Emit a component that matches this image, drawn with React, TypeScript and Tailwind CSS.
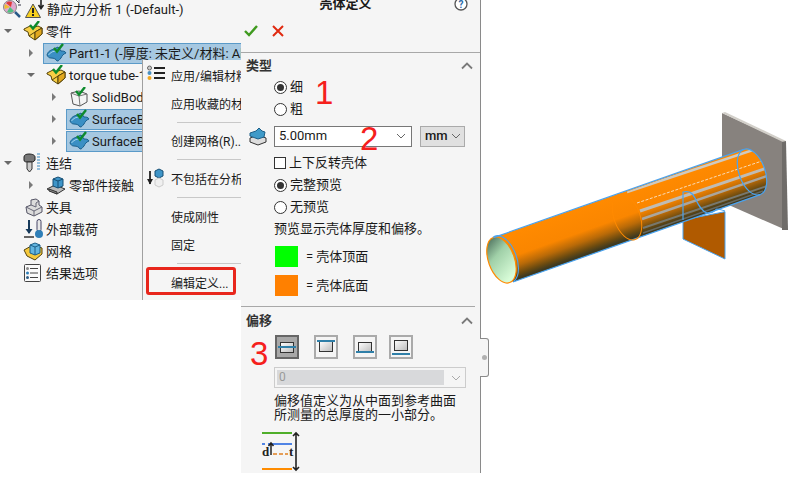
import React from "react";

const cjk = 'Roboto,"Noto Sans CJK SC",sans-serif';

const Check = ({ x = 8, y = 0 }: { x?: number; y?: number }) => (
  <path d={`M${x} ${y + 5}l3 3.500 6-7.500`} fill="none" stroke="#0d8a2c" strokeWidth="2.400" />
);

const ShellIcon = () => (
  <svg width="22" height="20" viewBox="0 0 22 20" className="shrink-0">
    <path d="M1 12c1-4 4-5 7-6l4-2 3 4c2 0 4 0 5 2-3 1-4 3-5 5-2 2-2 3-4 3-1-2-3-3-6-3-2 0-3-1-4-3z" fill="#3a8fc4" stroke="#1a5f8c" />
    <path d="M2.500 12c2-3 5-4 8-4" stroke="#a8d8f0" fill="none" />
    <Check x={8} y={0} />
  </svg>
);

const BoxIcon = () => (
  <svg width="22" height="20" viewBox="0 0 22 20" className="shrink-0">
    <path d="M1 8l6-3 3 1.500L15 5l4 2v6l-7 6-6-4-1-4-4-2z" fill="#f8cf45" stroke="#54430c" />
    <path d="M6 15l6-4 7-4M12 11v8" stroke="#54430c" fill="none" />
    <path d="M12 19l7-6V7l-7 4z" fill="#e2a81e" stroke="#54430c" />
    <Check x={7} y={-1} />
  </svg>
);

const SolidIcon = () => (
  <svg width="22" height="20" viewBox="0 0 22 20" className="shrink-0">
    <path d="M2 6l8-2 8 3v8l-7 4-7-2z" fill="#f4f4f4" stroke="#555" />
    <path d="M2 6l8 3 8-2M10 9l1 10" fill="none" stroke="#777" />
    <Check x={7} y={-1} />
  </svg>
);

const Tri = ({ open }: { open?: boolean }) =>
  open ? (
    <span className="w-0 h-0 border-x-[4px] border-x-transparent border-t-[4px] border-t-[#6a6a6a] shrink-0" />
  ) : (
    <span className="w-0 h-0 border-y-[4px] border-y-transparent border-l-[4px] border-l-[#7a7a7a] shrink-0" />
  );

function Row({
  pad,
  tri,
  open,
  icon,
  text,
  selected,
  selWidth,
}: {
  pad: number;
  tri?: boolean;
  open?: boolean;
  icon: React.ReactNode;
  text: string;
  selected?: boolean;
  selWidth?: string;
}) {
  return (
    <div className="h-[22px] flex items-center whitespace-nowrap text-[13px] text-[#1a1a1a]" style={{ paddingLeft: pad }}>
      <span className="w-[14px] flex items-center justify-center shrink-0">{tri ? <Tri open={open} /> : null}</span>
      <span className={`flex items-center h-[21px] ml-[5px] gap-[1px] shrink-0 ${selected ? "pl-[2px] bg-[#a6c8e1] border border-[#5a9ac8] " + (selWidth ?? "") : "pl-[3px]"}`}>
        {icon}
        <span className="pt-[2px]">{text}</span>
      </span>
    </div>
  );
}

const MenuItem = ({ text, icon }: { text: string; icon?: React.ReactNode }) => (
  <div className="h-7 flex items-center relative pl-[28px] pt-[3px] whitespace-nowrap text-[12px] text-[#1a1a1a]">
    {icon ? <span className="absolute left-[4px] top-[4px]">{icon}</span> : null}
    {text}
  </div>
);

const Chevron = () => (
  <svg width="12" height="8" viewBox="0 0 12 8"><path d="M1 6.500l5-5 5 5" fill="none" stroke="#7a7a7a" strokeWidth="1.800" /></svg>
);

const SmallDown = ({ color = "#666" }: { color?: string }) => (
  <svg width="10" height="6" viewBox="0 0 10 6" className="shrink-0"><path d="M1 1l4 4 4-4" fill="none" stroke={color} /></svg>
);

const Radio = ({ on }: { on?: boolean }) => (
  <span className="w-[13px] h-[13px] rounded-full border border-[#333] bg-white flex items-center justify-center shrink-0">
    {on ? <span className="w-[7px] h-[7px] rounded-full bg-[#333]" /> : null}
  </span>
);

const Opt = ({ on, text }: { on?: boolean; text: string }) => (
  <div className="h-[22px] flex items-center gap-[3px] pl-[33px]">
    <Radio on={on} />
    <span>{text}</span>
  </div>
);

const OffsetBtn = ({ active, kind, cls }: { active?: boolean; kind: number; cls?: string }) => {
  const lineY = kind === 0 ? 9 : kind === 1 ? 3 : kind === 2 ? 14 : 16;
  const rectY = kind === 0 ? 5 : kind === 1 ? 4 : kind === 2 ? 5 : 3;
  return (
    <span className={`w-[24px] h-[24px] border-2 flex items-center justify-center shrink-0 ${active ? "border-[#666] bg-[#a8a8a8]" : "border-[#aaa] bg-[#f5f5f5]"} ${cls ?? ""}`}>
      <svg width="20" height="20" viewBox="0 0 20 20">
        <defs>
          <linearGradient id={`g${kind}`} x1="0" y1="0" x2="1" y2="1">
            <stop offset="0" stopColor="#fff" />
            <stop offset="1" stopColor="#bbb" />
          </linearGradient>
        </defs>
        <rect x="3.500" y={rectY + 0.5} width="13" height="10" fill={`url(#g${kind})`} stroke="#333" />
        <rect x="1" y={lineY} width="18" height="2" fill="#2f7fa8" />
      </svg>
    </span>
  );
};

const Tube = () => (
  <svg width="321" height="479" viewBox="481 0 321 479" className="block">
    <defs>
      <linearGradient id="or" gradientUnits="userSpaceOnUse" x1="627" y1="192" x2="642" y2="234">
        <stop offset="0" stopColor="#ff8a00" />
        <stop offset="0.5" stopColor="#fa8600" />
        <stop offset="0.72" stopColor="#b96a08" />
        <stop offset="0.9" stopColor="#6a4a10" />
        <stop offset="1" stopColor="#3f3a20" />
      </linearGradient>
      <linearGradient id="inner" x1="0" y1="0" x2="0.3" y2="1">
        <stop offset="0" stopColor="#3f5f50" />
        <stop offset="0.45" stopColor="#a0d0a8" />
        <stop offset="1" stopColor="#d8fcd8" />
      </linearGradient>
      <clipPath id="tubeclip">
        <path d="M618.800 194.400L743.800 149.400A13 24 -20 0 1 760.200 194.600L635.200 239.600A13 24 -20 0 0 618.800 194.400z" />
      </clipPath>
    </defs>
    <polygon points="722,113 785,142 786,230 722,202" fill="#87827e" />
    <polygon points="722,113 725,112 786,141 785,143" fill="#d2cfc9" />
    <polygon points="782,142 786,141 788,230 782,230" fill="#6f6c69" />
    <polygon points="683,220 725,211.700 725,259 683,239" fill="#b05a00" stroke="#4aa3f0" />
    <path d="M494 237.400L743.800 149.400A13 24 -20 0 1 760.200 194.600L513 282z" fill="url(#or)" />
    <g clipPath="url(#tubeclip)" fill="none">
      <path d="M627 192L753 150" stroke="#cfcac0" strokeWidth="2.500" />
      <path d="M637 203L765 160" stroke="#f8dcb8" strokeWidth="1" strokeDasharray="3 1.500" />
      <path d="M640 211L767 168" stroke="#c0bcb4" strokeWidth="3" />
      <path d="M642 219L767 176" stroke="#aaa69e" strokeWidth="2.500" />
      <path d="M643 228L767 186" stroke="#77786e" strokeWidth="2" />
      <path d="M643 233L763 191" stroke="#666860" strokeWidth="1.500" />
    </g>
    <ellipse cx="501.500" cy="260" rx="13" ry="24" transform="rotate(-20 501.500 260)" fill="url(#inner)" stroke="#ff8a00" strokeWidth="1.200" />
    <path d="M492.800 237.400A13 24 -20 0 1 514 281" fill="none" stroke="#4aa3f0" strokeWidth="1.100" />
    <path d="M494 237.400L743.800 149.400M513 282L760.200 194.600" fill="none" stroke="#4aa3f0" strokeWidth="1.200" />
    <ellipse cx="627" cy="217" rx="13" ry="24" transform="rotate(-20 627 217)" fill="none" stroke="#ff8a00" strokeWidth="1" />
    <ellipse cx="752" cy="172" rx="13" ry="24" transform="rotate(-20 752 172)" fill="none" stroke="#4aa3f0" strokeWidth="1.200" />
    <path d="M683 220v-28c6-1 9 0 12 6 3 6 6 13 12 15 5 1 7-2 10-4 2 0 5 1 8 2" fill="none" stroke="#4aa3f0" strokeWidth="1.200" />
  </svg>
);

export default function App() {
  return (
    <div className="relative w-[802px] h-[479px] bg-white overflow-hidden flex items-start text-[13px] text-[#1a1a1a]" style={{ fontFamily: cjk }}>
      {/* tree */}
      <div className="relative w-[241px] h-[300px] bg-[#f5f5f5] overflow-hidden shrink-0">
        <div className="-mt-[2px]">
          <Row pad={1} icon={
            <svg width="44" height="22" viewBox="0 0 44 22" className="shrink-0 -ml-[21px]">
              <circle cx="8" cy="9" r="6.500" fill="#e0a8d0" stroke="#888" />
              <path d="M4 5a6 6 0 0 1 6-1l-1 5z" fill="#e03a3a" />
              <path d="M3 11a6 6 0 0 1 0-5l5 3z" fill="#f0c030" />
              <path d="M5 14a6 6 0 0 0 7-1l-4-4z" fill="#50c080" />
              <path d="M13 14l5 5" stroke="#2a5a88" strokeWidth="2.500" />
              <path d="M14 2l3 3M17 1v4M19 7h-3" stroke="#334" strokeWidth="1" />
              <path d="M31 6l7.500 13.500h-15z" fill="#f8d020" stroke="#555" />
              <rect x="30" y="10" width="2" height="5" fill="#222" />
              <rect x="30" y="16" width="2" height="2" fill="#222" />
              <path d="M39 1v9M36.500 7l2.500 3.500 2.500-3.500" stroke="#222" strokeWidth="1.600" fill="none" />
            </svg>
          } text="静应力分析 1 (-Default-)" />
          <Row pad={1} tri open icon={<BoxIcon />} text="零件" />
          <Row pad={24} tri selected selWidth="w-[200px]" icon={<ShellIcon />} text="Part1-1 (-厚度: 未定义/材料: Al" />
          <Row pad={24} tri open icon={<BoxIcon />} text="torque tube-1" />
          <Row pad={47} tri icon={<SolidIcon />} text="SolidBody" />
          <Row pad={47} tri selected selWidth="w-[90px]" icon={<ShellIcon />} text="SurfaceBody" />
          <Row pad={47} tri selected selWidth="w-[90px]" icon={<ShellIcon />} text="SurfaceBody" />
          <Row pad={1} tri open icon={
            <svg width="22" height="20" viewBox="0 0 22 20" className="shrink-0">
              <path d="M1 4c0-2 2-3 5-3s6 1 6 3v3c-1 2-3 2-6 2S1 9 1 7z" fill="#777" stroke="#222" />
              <path d="M4 9h5v7l-2.500 3L4 16z" fill="#ccc" stroke="#333" />
              <path d="M14 1h3M14 4h3M14 7h3M14 10h3M14 13h3M14 16h3" stroke="#3a8ac0" strokeWidth="1.200" />
            </svg>
          } text="连结" />
          <Row pad={24} tri icon={
            <svg width="22" height="20" viewBox="0 0 22 20" className="shrink-0">
              <path d="M1 14l8-4 10 4-8 5z" fill="#bbb" stroke="#333" />
              <path d="M3 16l8 3v-2l-8-3z" fill="#888" stroke="#333" />
              <path d="M7 4l5-2 5 2v7l-5 2-5-2z" fill="#3f95c8" stroke="#174f74" />
              <path d="M7 4l5 2 5-2M12 6v7" stroke="#174f74" fill="none" />
            </svg>
          } text="零部件接触" />
          <Row pad={1} icon={
            <svg width="22" height="20" viewBox="0 0 22 20" className="shrink-0">
              <path d="M3 10l5-2V3l5-1 3 2v4l3 2v5l-8 4-7-3z" fill="#dcdcdc" stroke="#556" />
              <path d="M3 10l8 4 8-4M11 14v5M8 8l5 2M16 4l-3 2v4" fill="none" stroke="#667" />
            </svg>
          } text="夹具" />
          <Row pad={1} icon={
            <svg width="22" height="20" viewBox="0 0 22 20" className="shrink-0">
              <path d="M6 1v13" stroke="#16395a" strokeWidth="2" />
              <path d="M2.500 10L6 15l3.500-5z" fill="#16395a" />
              <path d="M1 18h10" stroke="#333" strokeWidth="1.500" />
              <rect x="14" y="0.500" width="4" height="12" rx="2" fill="#e8e8e8" stroke="#446" />
              <circle cx="16" cy="15" r="4" fill="#2f7fb8" />
            </svg>
          } text="外部载荷" />
          <Row pad={1} icon={
            <svg width="22" height="20" viewBox="0 0 22 20" className="shrink-0">
              <path d="M1 9l9-5 9 3v6l-7 6-8-4z" fill="#f6c93c" stroke="#54430c" />
              <path d="M7 4l5-2 5 2v8l-5 2-5-2z" fill="#62b5e0" stroke="#1d5f88" />
              <path d="M7 4l5 2 5-2M12 6v8" stroke="#1d5f88" fill="none" />
            </svg>
          } text="网格" />
          <Row pad={1} icon={
            <svg width="22" height="20" viewBox="0 0 22 20" className="shrink-0">
              <rect x="1.500" y="1.500" width="16" height="17" rx="1" fill="#fafafa" stroke="#444" />
              <path d="M7 5.500h8M7 10h8M7 14.500h8" stroke="#444" />
              <circle cx="4.500" cy="5.500" r="1.500" fill="#888" />
              <circle cx="4.500" cy="10" r="1.500" fill="#2f7fb8" />
              <circle cx="4.500" cy="14.500" r="1.500" fill="#2f5f88" />
            </svg>
          } text="结果选项" />
        </div>
        {/* context menu */}
        <div className="absolute left-[142px] top-[60px] w-[120px] h-[240px] bg-[#f5f5f5] border-l border-[#a0a0a0] pt-px">
          <MenuItem text="应用/编辑材料" icon={
            <svg width="20" height="20" viewBox="0 0 20 20">
              <circle cx="2.500" cy="3" r="2" fill="#ccc" stroke="#666" />
              <circle cx="2.500" cy="8" r="2" fill="#4a90c0" />
              <circle cx="2.500" cy="13" r="2" fill="#f0a820" />
              <path d="M7 3h11M7 8h11M7 13h11" stroke="#222" strokeWidth="1.800" />
            </svg>
          } />
          <MenuItem text="应用收藏的材料" />
          <div className="h-px bg-[#c8c8c8] ml-[34px] mt-[5px] mb-[3px]" />
          <MenuItem text="创建网格(R)..." />
          <div className="h-px bg-[#c8c8c8] ml-[34px] mt-[5px] mb-[4px]" />
          <MenuItem text="不包括在分析中" icon={
            <svg width="20" height="20" viewBox="0 0 20 20">
              <path d="M3 3v13" stroke="#222" strokeWidth="1.800" />
              <path d="M0 11l3 5.500L6 11z" fill="#222" />
              <path d="M8 3l4-2 4 2v5l-4 2-4-2z" fill="#3f95c8" stroke="#174f74" />
              <path d="M8 12l4-2 4 2v5l-4 2-4-2z" fill="#f0f0f0" stroke="#ccc" />
            </svg>
          } />
          <div className="h-px bg-[#c8c8c8] ml-[34px] mt-[5px] mb-[4px]" />
          <MenuItem text="使成刚性" />
          <MenuItem text="固定" />
          <div className="h-px bg-[#c8c8c8] ml-[34px] mt-[5px] mb-[4px]" />
          <MenuItem text="编辑定义..." />
        </div>
        {/* red highlight */}
        <div className="absolute left-[146px] top-[267px] w-[90px] h-[28px] border-[3px] border-[#e8261c] rounded-[3px]" />
      </div>

      {/* property panel */}
      <div className="relative z-10 w-[240px] h-[473px] bg-[#f5f5f5] border-r border-[#8a8a8a] shrink-0">
        <div className="h-[21px] relative overflow-hidden">
          <div className="absolute left-0 right-0 -top-[6px] text-center font-bold text-[13px] pr-[30px]">壳体定义</div>
          <svg width="14" height="14" viewBox="0 0 14 14" className="absolute left-[213px] -top-[3px]">
            <circle cx="7" cy="7" r="6" fill="#fff" stroke="#555" strokeWidth="1.300" />
            <text x="7" y="10.500" textAnchor="middle" fontSize="10" fontWeight="700" fill="#2a6aa8">?</text>
          </svg>
        </div>
        <div className="h-[20px] flex items-center gap-[14px] pl-[3px]">
          <svg width="14" height="12" viewBox="0 0 14 12"><path d="M1 6l4 4 8-9" fill="none" stroke="#3f9a1f" strokeWidth="2.400" /></svg>
          <svg width="12" height="12" viewBox="0 0 12 12"><path d="M1 1l10 10M11 1L1 11" fill="none" stroke="#e02a10" strokeWidth="2" /></svg>
        </div>
        <div className="h-px bg-[#a8a8a8] mt-[11px]" />
        <div className="h-[24px] flex items-center justify-between pl-[5px] pr-[7px] mt-px">
          <span className="font-bold text-[#333]">类型</span>
          <Chevron />
        </div>
        <div className="-mt-[2px]">
          <Opt on text="细" />
          <Opt text="粗" />
        </div>
        <div className="flex items-center h-[20px] mt-[6px] pl-[8px]">
          <svg width="18" height="20" viewBox="0 0 18 20" className="shrink-0 mr-[7px]">
            <path d="M1 12l8-3 8 3v4l-8 3-8-3z" fill="#ddd" stroke="#333" />
            <path d="M1 7l6-2 3-3 3 3 3 1-1 5-6 2-8-3z" fill="#3f9ac8" stroke="#1d5f88" />
          </svg>
          <div className="w-[138px] h-[21px] bg-white border border-[#777] flex items-center justify-between pl-[4px] pr-[5px] text-[13px]">
            <span>5.00mm</span>
            <SmallDown />
          </div>
          <div className="w-[45px] h-[21px] ml-[8px] bg-[#e0e0e0] border border-[#aaa] flex items-center justify-between pl-[4px] pr-[3px] text-[13px] font-medium">
            <span>mm</span>
            <SmallDown />
          </div>
        </div>
        <div className="h-[22px] flex items-center gap-[3px] pl-[33px] mt-[6px]">
          <span className="w-[12px] h-[12px] border border-[#333] bg-white shrink-0" />
          <span>上下反转壳体</span>
        </div>
        <Opt on text="完整预览" />
        <Opt text="无预览" />
        <div className="pl-[33px] h-[22px] flex items-center">预览显示壳体厚度和偏移。</div>
        <div className="flex items-center pl-[34px] mt-[6px] h-[21px]">
          <span className="w-[23px] h-[21px] bg-[#00ff00] shrink-0" />
          <span className="ml-[8px]">= 壳体顶面</span>
        </div>
        <div className="flex items-center pl-[34px] mt-[8px] h-[21px]">
          <span className="w-[23px] h-[21px] bg-[#ff8000] shrink-0" />
          <span className="ml-[8px]">= 壳体底面</span>
        </div>
        <div className="h-px bg-[#a8a8a8] mt-[10px] mr-[5px]" />
        <div className="h-[24px] flex items-center justify-between pl-[5px] pr-[7px] mt-[2px]">
          <span className="font-bold text-[#333]">偏移</span>
          <Chevron />
        </div>
        <div className="flex items-center pl-[34px] mt-[2px]">
          <OffsetBtn active kind={0} />
          <OffsetBtn kind={1} cls="ml-[15px]" />
          <OffsetBtn kind={2} cls="ml-[15px]" />
          <OffsetBtn kind={3} cls="ml-[12px]" />
        </div>
        <div className="ml-[33px] mt-[8px] w-[192px] h-[21px] border border-[#ccc] bg-[#f5f5f5] flex items-center pl-[2px] pr-[4px]">
          <div className="w-[169px] h-[15px] bg-[#d8d9db] text-[12px] text-[#999] pl-[2px] leading-[15px]">0</div>
          <span className="ml-[7px]"><SmallDown color="#aaa" /></span>
        </div>
        <div className="ml-[33px] mt-[6px] leading-[14px] w-[190px]">偏移值定义为从中面到参考曲面<br />所测量的总厚度的一小部分。</div>
        <svg width="42" height="42" viewBox="0 0 42 42" className="ml-[21px] mt-[8px] block">
          <rect x="0" y="2" width="30" height="2" fill="#4fae2a" />
          <rect x="0" y="38" width="30" height="2" fill="#ff8c00" />
          <path d="M0 14h3M6 14h24" stroke="#1a5fe0" strokeWidth="1.500" />
          <path d="M11 24h4M17 24h4M23 24h3" stroke="#e08020" strokeWidth="1.500" />
          <path d="M9 25v-11M6.500 16l2.500-3 2.500 3" stroke="#222" strokeWidth="1.500" fill="none" />
          <path d="M34 3v37M31 6l3-3 3 3M31 37l3 3 3-3" stroke="#222" strokeWidth="1.600" fill="none" />
          <text x="0" y="26" fontSize="13" fontWeight="700" fontFamily="Liberation Serif, serif" fill="#222">d</text>
          <text x="27" y="26" fontSize="13" fontWeight="700" fontFamily="Liberation Serif, serif" fill="#222">t</text>
        </svg>
        {/* splitter handle */}
        <div className="absolute left-[239px] top-[338px] w-[9px] h-[39px] bg-[#f5f5f5] border-y border-r border-[#8a8a8a] rounded-r-[3px] flex items-center justify-center">
          <span className="w-[5px] h-[5px] rounded-full bg-[#b0b0b0]" />
        </div>
      </div>

      {/* graphics */}
      <div className="shrink-0"><Tube /></div>

      {/* red annotation numerals */}
      <span className="absolute z-20 left-[315px] top-[74px] text-[33px] leading-[38px] text-[#f5201c]" style={{ fontFamily: '"Liberation Sans",sans-serif' }}>1</span>
      <span className="absolute z-20 left-[360px] top-[120px] text-[33px] leading-[38px] text-[#f5201c]" style={{ fontFamily: '"Liberation Sans",sans-serif' }}>2</span>
      <span className="absolute z-20 left-[250px] top-[335px] text-[33px] leading-[38px] text-[#f5201c]" style={{ fontFamily: '"Liberation Sans",sans-serif' }}>3</span>
    </div>
  );
}
